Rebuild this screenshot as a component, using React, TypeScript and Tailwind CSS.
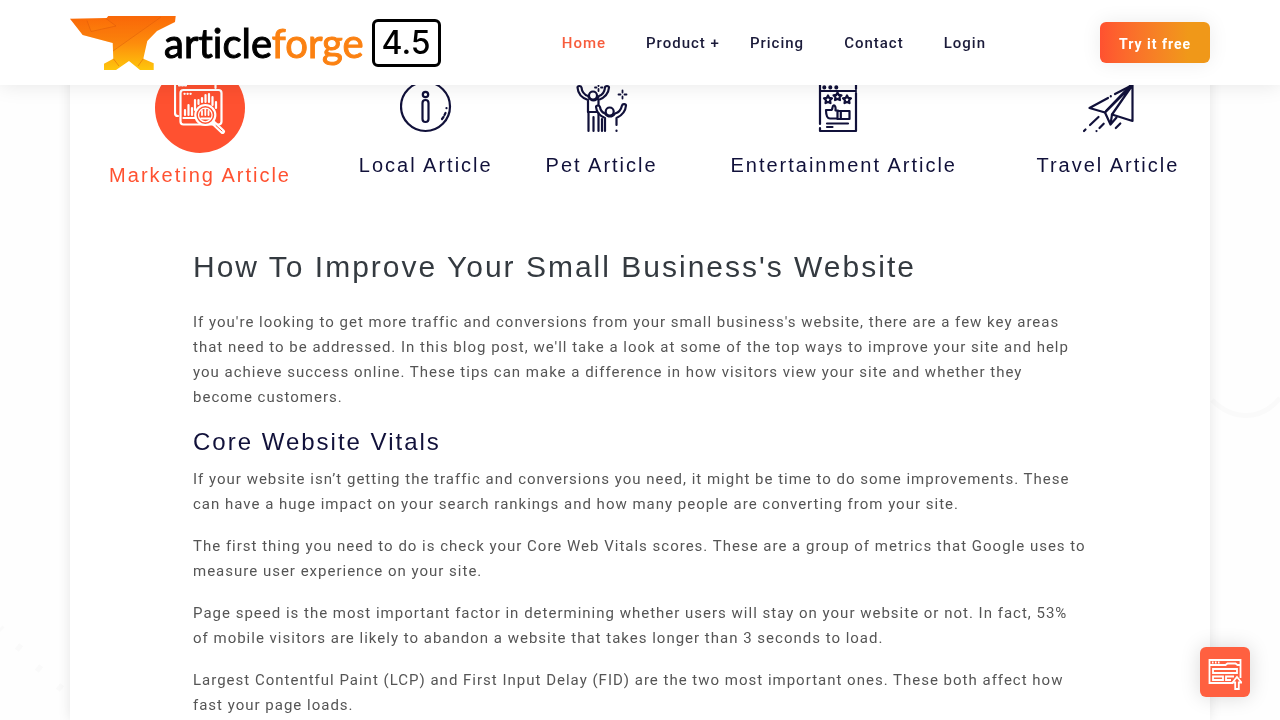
import type { ReactNode } from 'react';
import { clsx } from 'clsx';

interface Tab {
  label: string;
  icon: ReactNode;
}

const STAR = 'M0 -4 L1.3 -1.6 L4 -1.2 L2 0.8 L2.5 3.6 L0 2.4 L-2.5 3.6 L-2 0.8 L-4 -1.2 L-1.3 -1.6 Z';

function MarketingIcon() {
  return (
    <>
      <path d="M41.5 6V3a3 3 0 0 0-3-3H4a3 3 0 0 0-3 3v28a3 3 0 0 0 3 3M5 3.500h1M8 3.500h1M11 3.500h1" />
      <rect x="6.5" y="8" width="41" height="34.5" rx="3" />
      <path d="M10.500 11.800h.2M13.500 11.800h.2M16.500 11.800h.2" />
      <path d="M9.500 36h12" />
      <path d="M11 33v-5M14.500 33v-10M18 33v-7M21 28v-10M24.500 22v-4M28 20v-4M31.500 20v-7M35 20v-8M38.500 23v-8M42 26v-6" />
      <circle cx="31.300" cy="33" r="10" fill="#ff5130" />
      <circle cx="31.300" cy="33" r="6.800" strokeWidth="1.300" />
      <path d="M28 33v-4M31.300 33v-6M34.500 33v-4M27 36.500h9" strokeWidth="1.800" />
      <path d="M40 41.500l8.500 8" strokeWidth="5" />
      <path d="M42 43.500l6 5.500" stroke="#ff5130" strokeWidth="1" />
    </>
  );
}

function InfoIcon() {
  return (
    <>
      <circle cx="25.500" cy="25.500" r="24.500" />
      <circle cx="25.500" cy="13.500" r="2.700" />
      <rect x="22.500" y="19" width="6" height="22" rx="3" />
      <path d="M46.500 27v.2M45.500 32l-1 2M43.500 36l-1.500 2" />
    </>
  );
}

function PeopleIcon() {
  return (
    <>
      <circle cx="17" cy="14.500" r="4" />
      <path d="M12 31V19C6 17 2 13 1.500 6.500c0-2 3.500-2 4 0C6 12 9 14 12 15c3 6 8 6 11 0 3-1 5.500-3 6-8.500 0-2 4-2 4 0C32.500 13 28 17 22.500 19v5" />
      <path d="M12 31h9M12.500 31v19M17.500 50V36M22.500 50V32" />
      <circle cx="33.700" cy="30.500" r="4" />
      <path d="M29 50V37c-5-2-8.500-6-9-11 0-2 3.500-2 4 0 .5 3.500 2.500 5.500 5 6.500 3 4 7 4 10 0 4-1 6-3.500 7-8 .5-2 4-1.500 4 0-.5 6-4 10-9.500 12.500v7M40.500 49.500v.5M26 50V38" />
      <path d="M46.500 9.500v2M46.500 15.500v2M42.500 13.500h2M48.500 13.500h2M22.500 3v2M22.500 8v2M19 6.500h1.500M25 6.500h1.500" strokeWidth="1.800" />
    </>
  );
}

function ReviewIcon() {
  return (
    <>
      <path d="M2 43V1h36v7M38 12v38H2v-3M2 10h36" />
      <path d="M6.300 6.300v.2M12.300 6.300v.2M18.300 6.300v.2" strokeWidth="4" />
      <path d={STAR} transform="translate(10 18.500)" />
      <path d={STAR} transform="translate(19.500 15.500)" />
      <path d={STAR} transform="translate(29 18.500)" />
      <path d="M19 37.500h-7c-3 0-4-3-4-8.500h5.500c1.500-1 .5-4 2-4.500s2.500 2 2 5H20" />
      <path d="M19.500 30h12v8h-12zM22.800 30v8" />
      <path d="M9 42.500h21M9 46h5.500" />
    </>
  );
}

function PlaneIcon() {
  return (
    <>
      <path d="M26 17L7.500 27 23 31.500 50.500 4v36L30 33.500 50.500 4 33 13M28.800 15.200v.2" />
      <path d="M23 31.500l5.500 12L30 33.500M28.500 43.500l6-7M24 30L48 5" />
      <path d="M16.500 36L8 44M3.500 48.500l-1.500 1.500M21.700 42.700L17.500 47M14.500 50v.1M38.300 42.500L33.800 47" />
    </>
  );
}

const TABS: Tab[] = [
  { label: 'Marketing Article', icon: <MarketingIcon /> },
  { label: 'Local Article', icon: <InfoIcon /> },
  { label: 'Pet Article', icon: <PeopleIcon /> },
  { label: 'Entertainment Article', icon: <ReviewIcon /> },
  { label: 'Travel Article', icon: <PlaneIcon /> },
];

const LINKS = ['Pricing', 'Contact', 'Login'];

function Logo() {
  return (
    <a href="#" className="flex items-center font-[Lato,sans-serif] text-black">
      <svg viewBox="0 0 106 54" className="h-[54px] w-[106px]" aria-hidden="true">
        <defs>
          <linearGradient id="anvil" x1="0" y1="0" x2="0" y2="1">
            <stop offset="0" stopColor="#fb6a08" />
            <stop offset="0.5" stopColor="#fd8c0c" />
            <stop offset="1" stopColor="#fec60c" />
          </linearGradient>
        </defs>
        <path
          fill="url(#anvil)"
          d="M0 2.700L36.700 2 38.300 0H105.700L105 6 87 15 77.300 25 73.300 42.700 83.700 47.300V54H70L59 45 46 54H34V47.700L43.300 42.700 42.700 27 12.700 19Z"
        />
        <path fill="#f4600a" opacity="0.2" d="M0 2.700L17 4.500 21 15.700 46 10 36 2.500 38.300 0H91L43 35V27L12.700 19Z" />
        <path stroke="#d9560a" strokeWidth="0.8" opacity="0.6" fill="none" d="M91 1L43 35M17 4.500l4 11 25-5.500L36 2.500M43.300 42.700L49 50M73.300 42.700L68 50" />
      </svg>
      <span className="-ml-3 text-[40px] leading-[54px] [font-variant-ligatures:none] [-webkit-text-stroke:1px]">
        article<span className="text-[#fb8112]">forge</span>
      </span>
      <span className="ml-2 flex h-12 w-[69px] items-center justify-center rounded-md border-3 border-black font-[Inter,sans-serif] text-[32px] font-medium">
        4.5
      </span>
    </a>
  );
}

function Header() {
  return (
    <header className="fixed inset-x-0 top-0 z-20 bg-white shadow-[0_0_20px_rgba(0,0,0,0.1)]">
      <div className="mx-auto flex h-[85px] max-w-[1140px] items-center justify-between">
        <Logo />
        <nav className="flex flex-1 items-center justify-end pt-0.5 pr-[114px] text-[15px] font-medium tracking-[1px] text-[#1b1b3a]">
          <a href="#" className="mr-10 text-[#f75c3c]">Home</a>
          <a href="#" className="mr-[30px]">Product +</a>
          <div className="flex gap-10">
            {LINKS.map((link) => (
              <a key={link} href="#">{link}</a>
            ))}
          </div>
        </nav>
        <button
          type="button"
          className="h-[41px] w-[110px] rounded-md bg-linear-to-r from-[#ff5130] to-[#f09819] to-80% pt-0.5 text-sm font-bold tracking-[1px] text-white shadow-[0_0_20px_rgba(0,0,0,0.08)]"
        >
          Try it free
        </button>
      </div>
    </header>
  );
}

function TabButton({ tab, active }: { tab: Tab; active: boolean }) {
  return (
    <button type="button" className="flex w-full flex-col items-center">
      <span
        className={clsx(
          'flex justify-center',
          active ? 'size-[90px] items-center rounded-full bg-[#ff5130] text-white' : 'h-20 items-end pb-[10px]',
        )}
      >
        <svg
          viewBox="0 0 52 52"
          className="size-[52px]"
          fill="none"
          stroke="currentColor"
          strokeWidth="2.2"
          strokeLinecap="round"
          strokeLinejoin="round"
          aria-hidden="true"
        >
          {tab.icon}
        </svg>
      </span>
      <span className={clsx('mt-[10px] text-xl leading-6 tracking-[2px] whitespace-nowrap', active && 'text-[#ff5130]')}>
        {tab.label}
      </span>
    </button>
  );
}

function Article() {
  return (
    <article className="pt-[62px] pr-[124px] pl-[123px] text-[15px] leading-[25px] tracking-[1px] text-[#555]">
      <h1 className="mb-[25px] font-['Liberation_Sans',sans-serif] text-3xl leading-9 tracking-[2px] text-[#343a40]">
        How To Improve Your Small Business's Website
      </h1>
      <p>
        If you're looking to get more traffic and conversions from your small business's website, there are a few key
        areas that need to be addressed. In this blog post, we'll take a look at some of the top ways to improve your
        site and help you achieve success online. These tips can make a difference in how visitors view your site and
        whether they become customers.
      </p>
      <h2 className="mt-[17px] mb-[10px] font-['Liberation_Sans',sans-serif] text-2xl leading-[30px] tracking-[2px] text-[#11113a]">
        Core Website Vitals
      </h2>
      <div className="flex flex-col gap-[17px]">
        <p>
          If your website isn’t getting the traffic and conversions you need, it might be time to do some improvements.
          These can have a huge impact on your search rankings and how many people are converting from your site.
        </p>
        <p>
          The first thing you need to do is check your Core Web Vitals scores. These are a group of metrics that Google
          uses to measure user experience on your site.
        </p>
        <p>
          Page speed is the most important factor in determining whether users will stay on your website or not. In
          fact, 53% of mobile visitors are likely to abandon a website that takes longer than 3 seconds to load.
        </p>
        <p>
          Largest Contentful Paint (LCP) and First Input Delay (FID) are the two most important ones. These both affect
          how fast your page loads.
        </p>
      </div>
    </article>
  );
}

function BackToTop() {
  return (
    <button
      type="button"
      aria-label="Back to top"
      className="fixed right-[30px] bottom-[23px] z-10 flex size-[50px] items-center justify-center rounded-md bg-[#ff6040] text-white shadow-[0_0_20px_rgba(0,0,0,0.15)]"
    >
      <svg viewBox="0 0 34 32" className="mt-1 h-8 w-[34px]" fill="none" stroke="currentColor" strokeWidth="1.8">
        <path d="M25 25H1.500V2h31v18M1.500 7h16l2-1.500h8l2 1.500h3" />
        <path d="M4 4.500h1.500M7 4.500h1.500M10 4.500h1.500" />
        <path d="M5 11h24v4H5zM5 18.500h10v3.500H5zM26 18.500h-8V22h5" />
        <path d="M29 19l4.500 5.500h-2.700V31h-3.600v-6.500h-2.700z" fill="#ff6040" />
      </svg>
    </button>
  );
}

export default function App() {
  return (
    <div className="min-h-screen bg-[#fefefe] font-[Roboto,sans-serif]">
      <svg className="fixed inset-0 size-full" fill="none" stroke="#fafafa" strokeWidth="5" aria-hidden="true">
        <path d="M1212 400c20 20 48 22 68-2" />
        <path d="M0 628l2 2M17 646l4 3M37 667l4 3M58 686l4 3" strokeWidth="7" />
      </svg>
      <Header />
      <main className="relative mx-auto min-h-screen max-w-[1140px] bg-white pt-[63px] shadow-[0_0_12px_rgba(0,0,0,0.1)]">
        <ul className="table w-full font-['Liberation_Sans',sans-serif] text-[#11113a]">
          {TABS.map((tab, i) => (
            <li key={tab.label} className="table-cell align-top">
              <TabButton tab={tab} active={i === 0} />
            </li>
          ))}
        </ul>
        <Article />
      </main>
      <BackToTop />
    </div>
  );
}
